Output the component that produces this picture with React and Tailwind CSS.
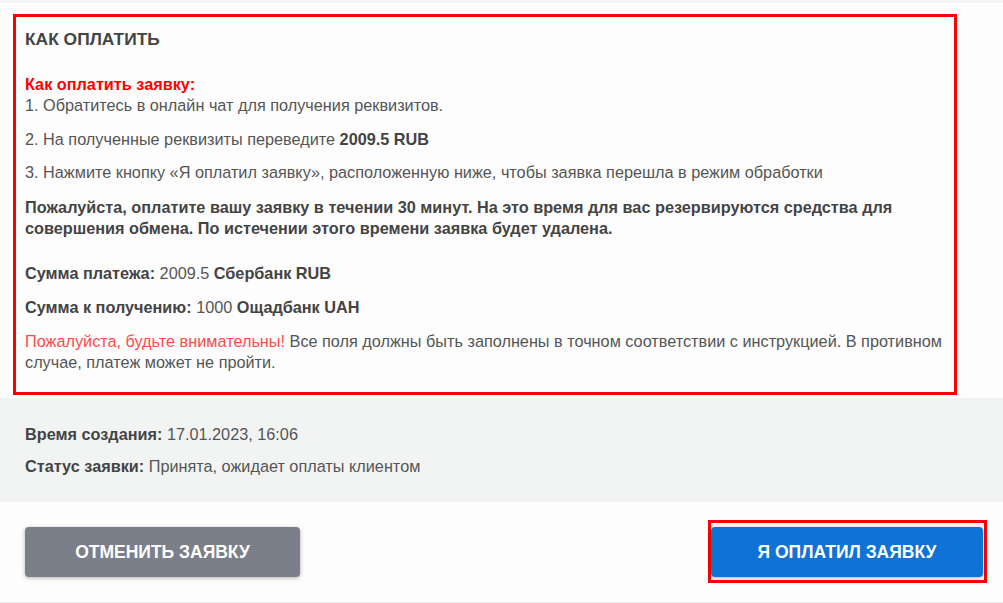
import React from "react";

const App = () => {
  return (
    <div
      className="w-[1003px] h-[603px] bg-[#fdfdfd] text-[16.25px] leading-[21px] text-[#555] overflow-hidden flex flex-col"
      style={{ fontFamily: '"Liberation Sans", Arial, sans-serif' }}
    >
      <div className="h-[3px] bg-[#f3f3f3]" />

      {/* How to pay */}
      <div className="ml-[13px] mt-[11px] w-[944px] border-[3px] border-[#ff0000] pl-[9px] pr-[10px] pt-[12px] pb-[19px]">
        <h2 className="font-bold text-[17.4px] text-[#444]">КАК ОПЛАТИТЬ</h2>
        <div className="mt-[24px]">
          <span className="font-bold text-[#ff0000]">Как оплатить заявку:</span>
          <br />
          1. Обратитесь в онлайн чат для получения реквизитов.
        </div>
        <p className="mt-[13px]">
          2. На полученные реквизиты переведите <b className="text-[#444]">2009.5 RUB</b>
        </p>
        <p className="mt-[12px]">
          3. Нажмите кнопку «Я оплатил заявку», расположенную ниже, чтобы заявка перешла в режим обработки
        </p>
        <p className="mt-[14px] font-bold text-[#444]">
          Пожалуйста, оплатите вашу заявку в течении 30 минут. На это время для вас резервируются средства для
          совершения обмена. По истечении этого времени заявка будет удалена.
        </p>
        <p className="mt-[24px]">
          <b className="text-[#444]">Сумма платежа:</b> 2009.5 <b className="text-[#444]">Сбербанк RUB</b>
        </p>
        <p className="mt-[13px]">
          <b className="text-[#444]">Сумма к получению:</b> 1000 <b className="text-[#444]">Ощадбанк UAH</b>
        </p>
        <p className="mt-[13px]">
          <span className="text-[#ff4a4a]">Пожалуйста, будьте внимательны!</span> Все поля должны быть заполнены в
          точном соответствии с инструкцией. В противном случае, платеж может не пройти.
        </p>
      </div>

      {/* Order info */}
      <div className="mt-[3px] bg-[#f1f4f3] pl-[25px] pt-[26px] pb-[25px] flex flex-col gap-[11px]">
        <div>
          <b className="text-[#444]">Время создания:</b> 17.01.2023, 16:06
        </div>
        <div>
          <b className="text-[#444]">Статус заявки:</b> Принята, ожидает оплаты клиентом
        </div>
      </div>

      {/* Actions */}
      <div className="flex items-start justify-between pl-[25px] pr-[16px] pt-[18px] flex-1 border-b border-[#eaeaea]">
        <button className="mt-[7px] w-[275px] h-[50px] rounded-[4px] bg-[#7a7f8a] text-white text-[17.5px] font-bold uppercase shadow-[0_1px_4px_rgba(0,0,0,0.3)]">
          Отменить заявку
        </button>
        <div className="border-[3px] border-[#ff0000] pl-0 pr-[1px] pt-[4px] pb-[3px]">
          <button className="w-[272px] h-[50px] rounded-[4px] bg-[#0e72d6] text-white text-[17.5px] font-bold uppercase shadow-[0_1px_4px_rgba(0,0,0,0.3)]">
            Я оплатил заявку
          </button>
        </div>
      </div>
    </div>
  );
};

export default App;
